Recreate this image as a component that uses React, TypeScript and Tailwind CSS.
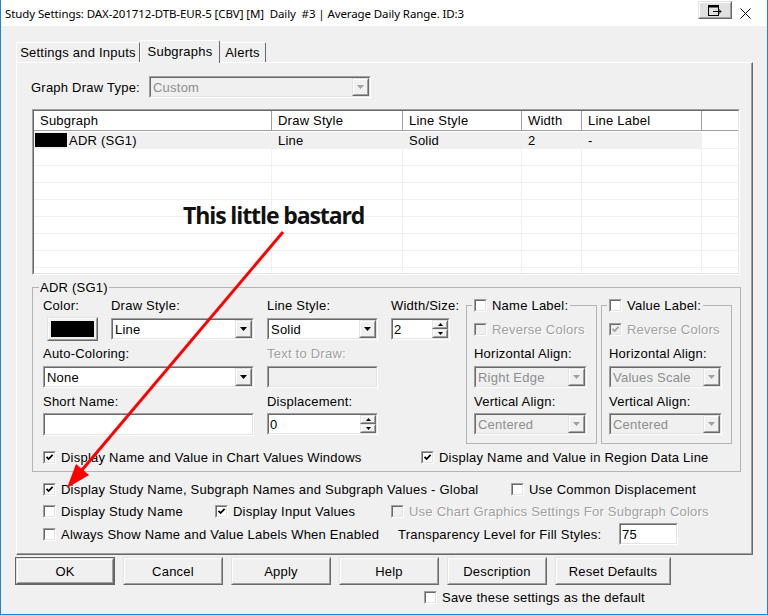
import type { ReactNode } from "react";

function Sunken({ className = "", innerClassName = "", children }: { className?: string; innerClassName?: string; children?: ReactNode }) {
  return (
    <div className={`border border-t-[#a0a0a0] border-l-[#a0a0a0] border-r-white border-b-white ${className}`}>
      <div className={`h-full w-full border border-t-[#696969] border-l-[#696969] border-r-[#e3e3e3] border-b-[#e3e3e3] ${innerClassName}`}>
        {children}
      </div>
    </div>
  );
}

function Raised({ className = "", innerClassName = "", children }: { className?: string; innerClassName?: string; children?: ReactNode }) {
  return (
    <div className={`border border-t-[#e3e3e3] border-l-[#e3e3e3] border-r-[#696969] border-b-[#696969] ${className}`}>
      <div className={`h-full w-full border border-t-white border-l-white border-r-[#a0a0a0] border-b-[#a0a0a0] ${innerClassName}`}>
        {children}
      </div>
    </div>
  );
}

function Check({ checked = false, disabled = false }: { checked?: boolean; disabled?: boolean }) {
  return (
    <Sunken
      className="h-[13px] w-[13px] shrink-0"
      innerClassName={`flex items-center justify-center ${disabled ? "bg-[#f0f0f0]" : "bg-white"}`}
    >
      {checked && (
        <svg width="9" height="9" viewBox="0 0 9 9">
          <path d="M1.5 3.8 L3.6 6 L7.6 1.8" stroke={disabled ? "#a0a0a0" : "#000"} strokeWidth="1.8" fill="none" />
        </svg>
      )}
    </Sunken>
  );
}

function Tri({ color = "#000", up = false, small = false }: { color?: string; up?: boolean; small?: boolean }) {
  const w = small ? 5 : 7;
  const h = small ? 3 : 4;
  return (
    <svg width={w} height={h} viewBox={`0 0 ${w} ${h}`}>
      <path d={up ? `M0 ${h} L${w / 2} 0 L${w} ${h} Z` : `M0 0 L${w} 0 L${w / 2} ${h} Z`} fill={color} />
    </svg>
  );
}

function Select({ value, w, disabled = false, className = "" }: { value: string; w: string; disabled?: boolean; className?: string }) {
  return (
    <Sunken className={`h-[22px] ${w} ${className}`} innerClassName={`flex ${disabled ? "bg-[#f0f0f0]" : "bg-white"}`}>
      <span className={`flex flex-1 items-center overflow-hidden whitespace-nowrap pl-[2px] ${disabled ? "text-[#8d8d8d]" : ""}`}>{value}</span>
      <Raised className="w-[17px] bg-[#f0f0f0]" innerClassName="flex items-center justify-center">
        <Tri color={disabled ? "#a0a0a0" : "#000"} />
      </Raised>
    </Sunken>
  );
}

function Spin({ value, w }: { value: string; w: string }) {
  return (
    <Sunken className={`h-[22px] ${w}`} innerClassName="flex bg-white">
      <span className="flex flex-1 items-center pl-[1px]">{value}</span>
      <div className="flex w-[16px] flex-col bg-[#f0f0f0]">
        <Raised className="flex-1" innerClassName="flex items-center justify-center">
          <Tri up small />
        </Raised>
        <Raised className="flex-1" innerClassName="flex items-center justify-center">
          <Tri small />
        </Raised>
      </div>
    </Sunken>
  );
}

function Field({ w, value = "", disabled = false, className = "" }: { w: string; value?: string; disabled?: boolean; className?: string }) {
  return (
    <Sunken className={`${w} ${className}`} innerClassName={`flex items-center pl-[1px] ${disabled ? "bg-[#f0f0f0]" : "bg-white"}`}>
      {value}
    </Sunken>
  );
}

function CheckRow({ label, checked = false, disabled = false, className = "" }: { label: string; checked?: boolean; disabled?: boolean; className?: string }) {
  return (
    <div className={`flex h-[15px] items-center gap-[5px] whitespace-nowrap ${disabled ? "text-[#a0a0a0] [text-shadow:1px_1px_0_#fff]" : ""} ${className}`}>
      <Check checked={checked} disabled={disabled} />
      {label}
    </div>
  );
}

function LabelGroup({ title, reverse, h, v, className = "" }: { title: string; reverse: boolean; h: string; v: string; className?: string }) {
  return (
    <fieldset className={`h-[146px] w-[131px] shrink-0 border border-[#b4b4b4] pl-[7px] ${className}`}>
      <legend className="-ml-[2px] px-[2px]">
        <CheckRow label={title} />
      </legend>
      <CheckRow label="Reverse Colors" checked={reverse} disabled className="mt-[9px]" />
      <div className="mt-[9px] whitespace-nowrap">Horizontal Align:</div>
      <Select className="mt-[5px]" w="w-[113px]" value={h} disabled />
      <div className="mt-[6px] whitespace-nowrap">Vertical Align:</div>
      <Select className="mt-[4px]" w="w-[113px]" value={v} disabled />
    </fieldset>
  );
}

const cols = [
  { name: "Subgraph", w: "w-[238px]" },
  { name: "Draw Style", w: "w-[131px]" },
  { name: "Line Style", w: "w-[119px]" },
  { name: "Width", w: "w-[60px]" },
  { name: "Line Label", w: "w-[120px]" },
];

function SubgraphTable() {
  const first = ["ADR (SG1)", "Line", "Solid", "2", "-"];
  return (
    <Sunken className="ml-[15px] mt-[11px] h-[166px] w-[708px]" innerClassName="overflow-hidden bg-white">
      <div className="flex h-[20px] border-b border-[#a0a0a0]">
        {cols.map((c) => (
          <div key={c.name} className={`flex shrink-0 items-center border-r border-[#a0a0a0] pl-[6px] ${c.w}`}>
            {c.name}
          </div>
        ))}
        <div className="flex-1" />
      </div>
      <div className="mt-[1px]">
        {Array.from({ length: 9 }).map((_, r) => (
          <div key={r} className="flex h-[17px]">
            {cols.map((c, i) => (
              <div
                key={c.name}
                className={`flex shrink-0 items-center border-b border-r border-[#f0f0f0] ${i === 0 ? "pl-[1px]" : "pl-[6px]"} ${c.w} ${r === 0 ? "bg-[#f0f0f0]" : ""}`}
              >
                {r === 0 && i === 0 && <span className="mr-[2px] h-[14px] w-[32px] bg-black" />}
                {r === 0 ? first[i] : ""}
              </div>
            ))}
            <div className="flex-1 border-b border-[#f0f0f0]" />
          </div>
        ))}
      </div>
    </Sunken>
  );
}

export default function App() {
  return (
    <div className="relative flex h-[615px] w-[768px] flex-col overflow-hidden border-x border-b border-[#1883d7] bg-[#f0f0f0] font-['Liberation_Sans',Arial,sans-serif] text-[13px] leading-[15px] tracking-[0.23px] text-black">
      {/* title bar */}
      <div className="flex h-[26px] shrink-0 items-center justify-between bg-white pl-[4px] pr-[16px]">
        <span className="whitespace-pre font-['Noto_Sans',sans-serif] text-[11.5px] tracking-[-0.1px]">
          {"Study Settings: DAX-201712-DTB-EUR-5 [CBV] [M]  Daily  #3 | Average Daily Range. ID:3"}
        </span>
        <div className="flex items-center gap-[8px] self-stretch">
          <Raised className="mb-[7px] mt-[1px] h-[18px] w-[34px] bg-[#e1e1e1]" innerClassName="flex items-center justify-center">
            <svg width="14" height="11" viewBox="0 0 14 11">
              <rect x="0.5" y="0.5" width="10" height="10" fill="none" stroke="#000" />
              <rect x="0.5" y="0.5" width="10" height="2" fill="#000" />
              <path d="M5 6.5 H13" stroke="#000" />
              <path d="M10.5 4 L13 6.5 L10.5 9" stroke="#000" fill="none" />
            </svg>
          </Raised>
          <svg width="11" height="11" viewBox="0 0 11 11">
            <path d="M0.5 0.5 L10.5 10.5 M10.5 0.5 L0.5 10.5" stroke="#000" strokeWidth="1" />
          </svg>
        </div>
      </div>

      {/* tabs */}
      <div className="mt-[14px] flex h-[22px] shrink-0 items-end pl-[15px]">
        <div className="flex h-[20px] w-[124px] items-center justify-center rounded-tl-[2px] border-l border-t border-r border-l-white border-t-white border-r-[#696969]">
          Settings and Inputs
        </div>
        <div className="relative z-10 -mb-[1px] flex h-[23px] w-[80px] justify-center rounded-t-[2px] border-l border-t border-r border-l-white border-t-white border-r-[#696969] bg-[#f0f0f0] pt-[3px]">
          Subgraphs
        </div>
        <div className="flex h-[20px] w-[46px] items-center justify-center rounded-tr-[2px] border-t border-r border-t-white border-r-[#696969]">
          Alerts
        </div>
      </div>

      {/* panel */}
      <div className="ml-[15px] h-[493px] w-[737px] shrink-0 border border-l-white border-t-white border-r-[#696969] border-b-[#696969] shadow-[inset_-1px_-1px_0_#a0a0a0]">
        <div className="mt-[13px] flex h-[22px] items-center pl-[14px]">
          <span className="w-[118px]">Graph Draw Type:</span>
          <Select w="w-[222px]" value="Custom" disabled />
        </div>

        <SubgraphTable />

        <fieldset className="ml-[15px] mt-[5px] h-[192px] w-[709px] border border-[#b4b4b4] pl-[10px] pt-[3px]">
          <legend className="-ml-[4px] px-[1px]">ADR (SG1)</legend>
          <div className="flex">
            <div className="grid w-[335px] shrink-0 grid-cols-[55px_143px_111px] grid-rows-[20px_22px_26px_22px_25px_23px] gap-x-[13px]">
              <span>Color:</span>
              <span>Draw Style:</span>
              <span>Line Style:</span>

              <Raised className="-mt-[1px] ml-[4px] h-[24px] w-[51px] bg-[#f0f0f0]" innerClassName="p-[2px]">
                <div className="h-full w-full bg-black" />
              </Raised>
              <Select w="w-[143px]" value="Line" />
              <Select w="w-[111px]" value="Solid" />

              <span className="col-span-2 pt-[6px]">Auto-Coloring:</span>
              <span className="pt-[6px] text-[#a0a0a0] [text-shadow:1px_1px_0_#fff]">Text to Draw:</span>

              <Select className="col-span-2" w="w-[211px]" value="None" />
              <Field w="w-[111px] h-[22px]" disabled />

              <span className="col-span-2 pt-[6px]">Short Name:</span>
              <span className="pt-[6px]">Displacement:</span>

              <Field className="col-span-2" w="w-[211px] h-[23px]" />
              <Spin w="w-[111px]" value="0" />
            </div>

            <div className="ml-[13px] flex w-[59px] shrink-0 flex-col">
              <span className="h-[20px] whitespace-nowrap">Width/Size:</span>
              <Spin w="w-[59px]" value="2" />
            </div>

            <LabelGroup className="ml-[16px]" title="Name Label:" reverse={false} h="Right Edge" v="Centered" />
            <LabelGroup className="ml-[4px]" title="Value Label:" reverse h="Values Scale" v="Centered" />
          </div>

          <div className="mt-[6px] flex">
            <CheckRow className="w-[378px]" label="Display Name and Value in Chart Values Windows" checked />
            <CheckRow label="Display Name and Value in Region Data Line" checked />
          </div>
        </fieldset>

        <div className="pl-[26px]">
          <div className="mt-[10px] flex">
            <CheckRow className="w-[468px]" label="Display Study Name, Subgraph Names and Subgraph Values - Global" checked />
            <CheckRow label="Use Common Displacement" />
          </div>
          <div className="mt-[7px] flex">
            <CheckRow className="w-[172px]" label="Display Study Name" />
            <CheckRow className="w-[176px]" label="Display Input Values" checked />
            <CheckRow label="Use Chart Graphics Settings For Subgraph Colors" disabled />
          </div>
          <div className="mt-[4px] flex h-[22px] items-center">
            <CheckRow className="w-[355px]" label="Always Show Name and Value Labels When Enabled" />
            <span className="w-[221px]">Transparency Level for Fill Styles:</span>
            <Field w="w-[59px] h-[22px]" value="75" />
          </div>
        </div>
      </div>

      {/* buttons */}
      <div className="mt-[2px] flex shrink-0 gap-[8px] pl-[14px]">
        <div className="h-[28px] w-[100px] border border-[#646464]">
          <Raised className="h-full" innerClassName="flex items-center justify-center">OK</Raised>
        </div>
        {["Cancel", "Apply", "Help", "Description"].map((b) => (
          <Raised key={b} className="h-[28px] w-[100px]" innerClassName="flex items-center justify-center">
            {b}
          </Raised>
        ))}
        <Raised className="h-[28px] w-[116px]" innerClassName="flex items-center justify-center">
          Reset Defaults
        </Raised>
      </div>

      <div className="mt-[5px] pl-[423px]">
        <CheckRow label="Save these settings as the default" />
      </div>

      {/* annotation */}
      <div className="pointer-events-none absolute left-[182px] top-[204px] whitespace-nowrap font-['Open_Sans',sans-serif] text-[23px] font-bold leading-none tracking-[-1.1px] text-[#111]">
        This little bastard
      </div>
      <svg className="pointer-events-none absolute -left-[1px] top-0" width="768" height="615" viewBox="0 0 768 615">
        <line x1="283" y1="232" x2="82" y2="470" stroke="#ff0000" strokeWidth="3" />
        <polygon points="67,488 89,475 76,464" fill="#ff0000" />
      </svg>
    </div>
  );
}
